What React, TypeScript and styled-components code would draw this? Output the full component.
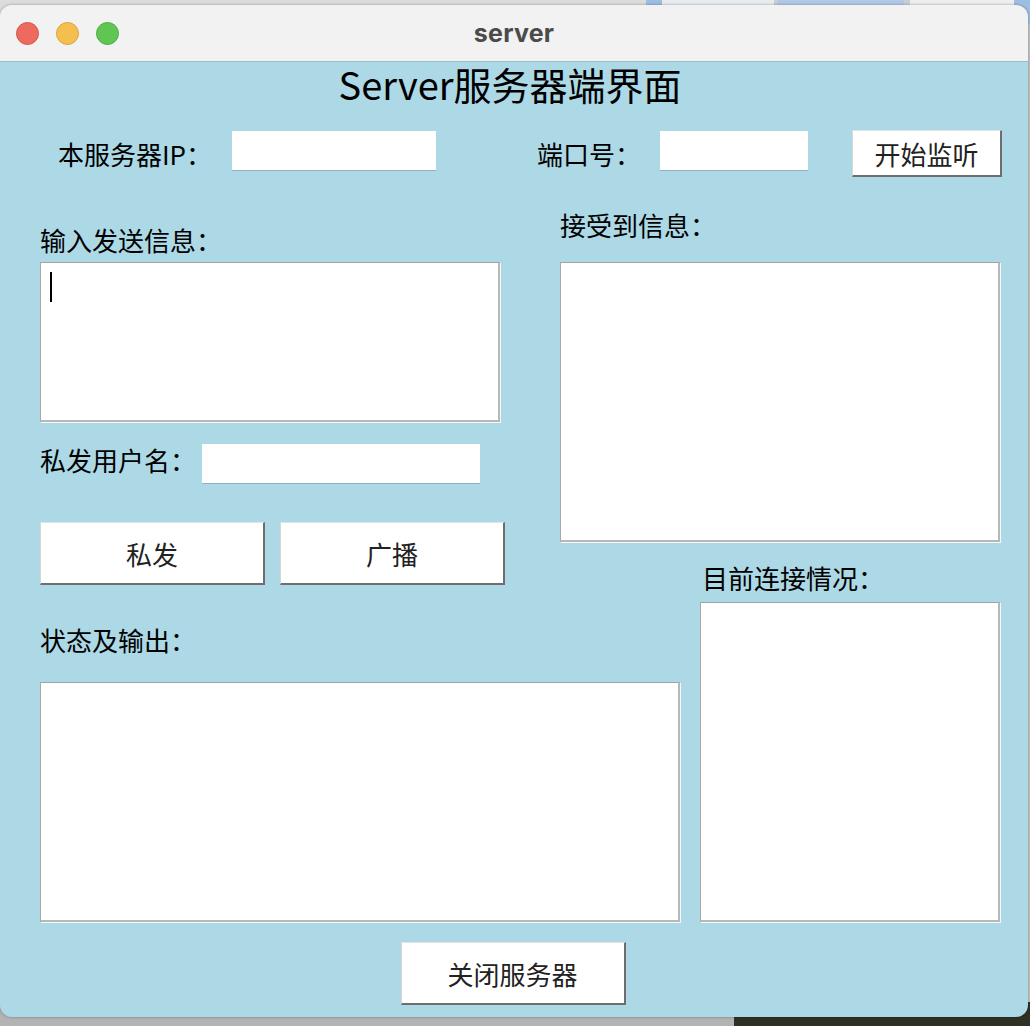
import React from 'react'
import styled, {createGlobalStyle} from 'styled-components'

const GlobalStyle = createGlobalStyle`
  html, body {
    margin: 0;
    padding: 0;
    background: #c8c8c8;
  }
  * {
    box-sizing: border-box;
  }
`

const cjk = `"Noto Sans CJK SC", "Noto Sans", sans-serif`

const Desktop = styled.div`
  position: relative;
  width: 1030px;
  height: 1026px;
  overflow: hidden;
  display: flex;
  flex-direction: column;
  justify-content: space-between;
  background: #c4c4c4;
`

const Band = styled.div<{ $height: number }>`
  display: flex;
  height: ${p => p.$height}px;
`

const Segment = styled.div<{ $w?: number; $bg: string }>`
  flex: ${p => (p.$w ? `0 0 ${p.$w}px` : '1')};
  background: ${p => p.$bg};
`

const Window = styled.div`
  position: absolute;
  top: 5px;
  left: 0;
  width: 1028px;
  height: 1012px;
  border-radius: 12px;
  overflow: hidden;
  display: flex;
  flex-direction: column;
  box-shadow: 0 0 3px rgba(0, 0, 0, 0.35);
`

const TitleBar = styled.div`
  height: 57px;
  flex: 0 0 57px;
  display: grid;
  grid-template-columns: 1fr auto 1fr;
  align-items: center;
  background: #f1f2f1;
  border-bottom: 1px solid #9fbccb;
`

const Lights = styled.div`
  display: flex;
  gap: 17px;
  padding-left: 16px;
`

const Light = styled.span<{ $color: string; $edge: string }>`
  width: 23px;
  height: 23px;
  border-radius: 50%;
  background: ${p => p.$color};
  border: 1px solid ${p => p.$edge};
`

const WindowTitle = styled.div`
  font-family: Inter, "Noto Sans", sans-serif;
  font-weight: 700;
  font-size: 25px;
  color: #4b4b4b;
  letter-spacing: 0.2px;
`

const Content = styled.div`
  flex: 1;
  display: flex;
  flex-direction: column;
  background: #add8e6;
  font-family: ${cjk};
  color: #000;
`

const Heading = styled.h1`
  margin: 0;
  font-size: 38px;
  font-weight: 400;
  line-height: 44px;
  text-align: center;
  padding-right: 8px;
`

const TopRow = styled.div`
  display: flex;
  align-items: flex-start;
  margin-top: 24px;
  padding-left: 58px;
  height: 47px;
`

const Label = styled.div<{ $w: number; $ml?: number; $lh: number }>`
  width: ${p => p.$w}px;
  margin-left: ${p => p.$ml ?? 0}px;
  font-size: 26px;
  line-height: ${p => p.$lh}px;
  white-space: nowrap;
`

const Entry = styled.div<{ $w: number }>`
  width: ${p => p.$w}px;
  height: 39px;
  margin-top: 1px;
  background: #fff;
  box-shadow: 0 1px 0 #8eb1c3;
`

const Button = styled.button<{ $w: number; $h: number; $ml?: number }>`
  width: ${p => p.$w}px;
  height: ${p => p.$h}px;
  margin-left: ${p => p.$ml ?? 0}px;
  padding: 0;
  background: #fff;
  border-top: 1px solid #e4e4e4;
  border-left: 1px solid #d6d6d6;
  border-right: 2px solid #6e6e6e;
  border-bottom: 2px solid #6e6e6e;
  font-family: ${cjk};
  font-size: 26px;
  color: #222;
`

const Columns = styled.div`
  display: flex;
  gap: 55px;
  padding-left: 40px;
`

const Column = styled.div<{ $w: number; $pt: number }>`
  width: ${p => p.$w}px;
  padding-top: ${p => p.$pt}px;
  display: flex;
  flex-direction: column;
  align-items: flex-start;
`

const Caption = styled.div<{ $mt?: number; $right?: number }>`
  margin-top: ${p => p.$mt ?? 0}px;
  font-size: 26px;
  line-height: 34px;
  white-space: nowrap;
  ${p => (p.$right ? `align-self: flex-end; width: ${p.$right}px; padding-left: 2px;` : '')}
`

const TextBox = styled.div<{ $w: number; $h: number; $mt: number; $end?: boolean }>`
  width: ${p => p.$w}px;
  height: ${p => p.$h}px;
  flex: 0 0 auto;
  margin-top: ${p => p.$mt}px;
  background: #fff;
  border-top: 1px solid #a2a2a2;
  border-left: 1px solid #a8a8a8;
  border-right: 2px solid #b8b8b8;
  border-bottom: 2px solid #b8b8b8;
  box-shadow: 1px 1px 0 #f4f8fa;
  ${p => (p.$end ? 'align-self: flex-end;' : '')}
`

const Caret = styled.span`
  display: block;
  width: 2px;
  height: 30px;
  margin: 9px 0 0 9px;
  background: #000;
`

const UserRow = styled.div`
  display: flex;
  margin-top: 21px;
  height: 39px;
`

const ButtonRow = styled.div`
  display: flex;
  gap: 15px;
  margin-top: 40px;
`

const Footer = styled.div`
  display: flex;
  justify-content: center;
  margin-top: 20px;
  padding-right: 2px;
`

export default function App() {
    return <>
        <GlobalStyle/>
        <Desktop>
            <Band $height={24}>
                <Segment $bg="#dcdcdc"/>
                <Segment $w={16} $bg="#9dbde2"/>
                <Segment $w={112} $bg="#e9ecef"/>
                <Segment $w={4} $bg="#c9ced4"/>
                <Segment $w={126} $bg="#b1c9e6"/>
                <Segment $w={6} $bg="#c9ced4"/>
                <Segment $w={104} $bg="#eceef0"/>
                <Segment $w={16} $bg="#9dbde2"/>
            </Band>
            <Band $height={24}>
                <Segment $w={734} $bg="#b3b3b3"/>
                <Segment $bg="#2e3124"/>
            </Band>
            <Window>
                <TitleBar>
                    <Lights>
                        <Light $color="#ee6a5e" $edge="#d5574c"/>
                        <Light $color="#f5bf4f" $edge="#d9a33a"/>
                        <Light $color="#61c554" $edge="#4fad43"/>
                    </Lights>
                    <WindowTitle>server</WindowTitle>
                    <div/>
                </TitleBar>
                <Content>
                    <Heading>Server服务器端界面</Heading>
                    <TopRow>
                        <Label $w={174} $lh={47}>本服务器IP：</Label>
                        <Entry $w={204}/>
                        <Label $w={123} $ml={101} $lh={47}>端口号：</Label>
                        <Entry $w={148}/>
                        <Button $w={150} $h={47} $ml={44}>开始监听</Button>
                    </TopRow>
                    <Columns>
                        <Column $w={465} $pt={46}>
                            <Caption>输入发送信息：</Caption>
                            <TextBox $w={460} $h={160} $mt={5}>
                                <Caret/>
                            </TextBox>
                            <UserRow>
                                <Label $w={162} $lh={34}>私发用户名：</Label>
                                <Entry $w={278}/>
                            </UserRow>
                            <ButtonRow>
                                <Button $w={225} $h={63}>私发</Button>
                                <Button $w={225} $h={63}>广播</Button>
                            </ButtonRow>
                            <Caption $mt={38}>状态及输出：</Caption>
                            <TextBox $w={640} $h={240} $mt={25}/>
                        </Column>
                        <Column $w={440} $pt={31}>
                            <Caption>接受到信息：</Caption>
                            <TextBox $w={440} $h={280} $mt={20}/>
                            <Caption $mt={19} $right={300}>目前连接情况：</Caption>
                            <TextBox $w={300} $h={320} $mt={7} $end/>
                        </Column>
                    </Columns>
                    <Footer>
                        <Button $w={225} $h={63}>关闭服务器</Button>
                    </Footer>
                </Content>
            </Window>
        </Desktop>
    </>
}
